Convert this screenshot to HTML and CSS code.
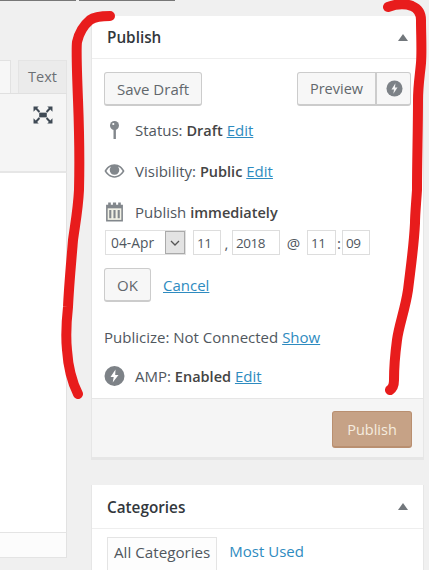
FILE: index.html
```html
<!DOCTYPE html>
<html lang="en">
<head>
<meta charset="utf-8">
<title>Publish</title>
<link rel="stylesheet" href="styles.css">
</head>
<body>
<div class="topbars"><span class="topbar topbar-a"></span><span class="topbar topbar-b"></span></div>
<div class="page">
  <div class="editor">
    <div class="tabs"><span class="tab-visual"></span><span class="tab-text">Text</span></div>
    <div class="toolbar">
      <svg class="fullscreen" viewBox="0 0 21 19" width="20" height="18"><g fill="#3f4a55"><path d="M0.500 0.500h5.500L4.300 2.200 7.500 5.500 6 7 2.800 3.700 0.500 6zM20.500 0.500h-5.500l1.700 1.700-3.200 3.300 1.500 1.500 3.200-3.300L20.500 6zM0.500 18.500h5.500l-1.700-1.700 3.200-3.300L6 12l-3.200 3.300L0.500 13zM20.500 18.500h-5.500l1.700-1.700-3.200-3.300 1.500-1.500 3.200 3.300L20.500 13z"/><rect x="6.500" y="7" width="8" height="5"/></g></svg>
    </div>
    <div class="canvas"></div>
    <div class="status"></div>
  </div>
  <div class="side">
    <section class="box">
      <h2 class="box-head">Publish<span class="caret"></span></h2>
      <div class="box-body">
        <div class="actions">
          <button class="btn">Save Draft</button>
          <div class="preview-group">
            <button class="btn btn-preview">Preview</button>
            <button class="btn btn-amp"><svg viewBox="0 0 18 18" width="17" height="17"><circle cx="9" cy="9" r="8.500" fill="#7d8287"/><path d="M10 3.500 5.800 10h2.700l-.7 4.500L12.200 8H9.500z" fill="#f5f5f5"/></svg></button>
          </div>
        </div>
        <div class="row row-status">
          <svg class="ico" viewBox="0 0 20 20" width="20" height="20"><circle cx="10" cy="5.500" r="4.500" fill="#82878c"/><rect x="9" y="8" width="2.400" height="11" fill="#82878c"/><circle cx="8.800" cy="4" r="1.100" fill="#fff"/></svg>
          <span>Status: <b>Draft</b> <a href="#">Edit</a></span>
        </div>
        <div class="row row-vis">
          <svg class="ico" viewBox="0 0 22 16" width="22" height="16"><path d="M11 1C6 1 2.500 4.500.5 8c2 3.500 5.500 7 10.500 7s8.500-3.500 10.500-7C19.500 4.500 16 1 11 1zm0 12.500c-3.700 0-6.700-2.500-8.500-5.500C3.700 6 5.500 4 7.500 3.200 6.600 4.200 6 5.500 6 7a5 5 0 0 0 10 0c0-1.500-.6-2.800-1.500-3.800 2 .8 3.800 2.800 5 4.800-1.800 3-4.800 5.500-8.500 5.500z" fill="#82878c"/></svg>
          <span>Visibility: <b>Public</b> <a href="#">Edit</a></span>
        </div>
        <div class="row row-date">
          <svg class="ico" viewBox="1.500 0.500 17 19" width="20" height="20"><path d="M2 3h2V1h2.500v2h2V1h3v2h2V1H16v2h2v16H2z" fill="#82878c"/><rect x="3.500" y="6.500" width="13" height="11" fill="#f1f1e6"/><path d="M5 8h2v8H5zM9 8h2v8H9zM13 8h2v8h-2z" fill="#82878c"/></svg>
          <span>Publish <b>immediately</b></span>
        </div>
        <div class="date-row">
          <span class="select"><span class="select-val">04-Apr</span><span class="select-arrow"><svg viewBox="0 0 10 6" width="10" height="6"><path d="M1 1l4 4 4-4" fill="none" stroke="#555" stroke-width="1.300"/></svg></span></span>
          <span class="field f-day">11</span><span class="sep">,</span>
          <span class="field f-year">2018</span><span class="at">@</span>
          <span class="field f-hour">11</span><span class="colon">:</span>
          <span class="field f-min">09</span>
        </div>
        <div class="ok-row"><button class="btn btn-ok">OK</button><a href="#">Cancel</a></div>
        <div class="row-plain">Publicize: Not Connected <a href="#">Show</a></div>
        <div class="row row-amp">
          <svg class="ico" viewBox="0 0 20 20" width="20" height="20"><circle cx="10" cy="10" r="10" fill="#7d8287"/><path d="M11 3.500 6 11h3.200l-1 5.500L14 9h-3.300z" fill="#fff"/></svg>
          <span>AMP: <b>Enabled</b> <a href="#">Edit</a></span>
        </div>
      </div>
      <div class="box-foot"><button class="btn-publish">Publish</button></div>
    </section>
    <section class="box box-cat">
      <h2 class="box-head cat-head">Categories<span class="caret"></span></h2>
      <div class="cat-tabs"><span class="cat-active">All Categories</span><a class="cat-link" href="#">Most Used</a></div>
    </section>
  </div>
</div>
<svg class="scribble" viewBox="0 0 429 570" width="429" height="570">
  <path d="M110 16C100 16 94 17 90 20C84 25 79 33 77 42C76 50 77 75 78 100C79 125 80 150 79 190C78 210 75 225 73 240C71 265 69 285 68 307C66 325 66 340 67 350C68 365 70 378 78 394" />
  <path d="M388 7C396 4 404 3 412 6C419 9 421 14 421 20C421 35 422 50 421 63C420 75 418 85 418 100C418 130 417 160 417 190C416 205 415 215 415 223C414 245 411 265 408 290C405 310 399 325 397 340C395 355 394 370 394 380C394 385 393 388 390 390"/>
</svg>
</body>
</html>
```
FILE: styles.css
```css
* { box-sizing: border-box; }
html, body { margin: 0; padding: 0; }
body {
  width: 429px;
  height: 570px;
  overflow: hidden;
  position: relative;
  background: #f0f0f0;
  font-family: "Open Sans", "Noto Sans", sans-serif;
  font-size: 15px;
  color: #50575e;
}
a { color: #2e8bc0; text-decoration: underline; }
b { font-weight: 600; font-size: 14.500px; color: #444; }

.topbars { display: flex; gap: 3px; height: 1px; }
.topbar { display: block; height: 1px; background: #777; }
.topbar-a { width: 76px; }
.topbar-b { width: 96px; }

.page { display: flex; gap: 24px; padding-top: 15px; }

.editor { width: 67px; flex: none; padding-top: 44px; height: 554px; display: flex; flex-direction: column; }
.tabs { display: flex; height: 34px; gap: 7px; }
.tab-visual { width: 11px; background: #f7f7f7; border: 1px solid #e2e2e2; border-left: 0; border-bottom: 0; }
.tab-text { width: 49px; background: #ebebeb; border: 1px solid #e4e4e4; border-bottom: 0; text-align: center; line-height: 32px; color: #6b7075; font-size: 14.500px; }
.toolbar { height: 80px; background: #f5f5f5; border-top: 1px solid #e0e0e0; border-right: 1px solid #e2e2e2; border-bottom: 2px solid #e6e6e6; position: relative; display: flex; justify-content: flex-end; padding: 12px 13px 0 0; margin-top: -1px; }
.fullscreen { display: block; }
.canvas { height: 359px; background: #fff; border-right: 1px solid #e2e2e2; }
.status { height: 26px; background: #fcfcfc; border-top: 1px solid #e4e4e4; border-bottom: 1px solid #e4e4e4; border-right: 1px solid #e2e2e2; }

.side { width: 333px; flex: none; }
.box { background: #fff; border: 1px solid #e6e6e6; border-top: 0; }
.box-head { margin: 0; height: 43px; padding: 0 14px 0 15px; display: flex; align-items: center; justify-content: space-between; font-size: 15.300px; font-weight: 600; color: #32373c; border-bottom: 1px solid #eee; }
.caret { width: 0; height: 0; border-left: 5px solid transparent; border-right: 5px solid transparent; border-bottom: 7px solid #72777c; margin-right: 1px; }

.box-body { height: 339px; padding: 13px 12px 0 12px; }
.actions { display: flex; justify-content: space-between; }
.btn { display: block; font: inherit; font-size: 15px; color: #62676c; height: 34px; padding: 0 12px; background: #f7f7f7; border: 1px solid #ccc; border-bottom-width: 2px; border-radius: 3px; }
.preview-group { display: flex; }
.btn-preview { border-radius: 3px 0 0 3px; border-right-width: 1px; width: 79px; padding: 0; font-size: 14.500px; }
.btn-amp { width: 35px; padding: 0 0 0 1px; border-left: 1px solid #ccc; border-radius: 0 3px 3px 0; display: flex; align-items: center; justify-content: center; }

.row { display: flex; align-items: center; gap: 10px; height: 20px; }
.ico { display: block; flex: none; width: 21px; }
.row-status { margin-top: 14px; }
.row-vis { margin-top: 21px; }
.row-date { margin-top: 21px; }
.date-row { display: flex; align-items: center; margin-top: 8px; height: 25px; padding-left: 1px; }
.select { display: flex; width: 81px; height: 25px; background: #fff; border: 1px solid #e0e0e0; }
.select-val { flex: 1; padding-left: 5px; line-height: 24px; font-size: 13.800px; }
.select-arrow { width: 20px; background: #e3e3e3; border: 1px solid #aaa; display: flex; align-items: center; justify-content: center; }
.field { display: block; height: 25px; background: #fff; border: 1px solid #ddd; line-height: 25px; padding-left: 3px; font-size: 13.500px; letter-spacing: -0.500px; }
.f-day { width: 28px; margin-left: 7px; }
.sep { width: 11px; text-align: center; }
.f-year { width: 48px; }
.at { width: 27px; text-align: center; }
.f-hour { width: 29px; }
.colon { width: 6px; text-align: center; }
.f-min { width: 28px; }

.ok-row { display: flex; align-items: center; gap: 12px; margin-top: 13px; }
.btn-ok { width: 47px; height: 34px; padding: 0; }
.row-plain { margin-top: 25px; height: 20px; line-height: 20px; }
.row-amp { margin-top: 19px; }

.box-foot { height: 61px; background: #f5f5f5; border-top: 1px solid #e6e6e6; border-bottom: 2px solid #e6e6e6; display: flex; justify-content: flex-end; align-items: flex-start; padding: 12px 11px 0 0; }
.btn-publish { width: 80px; height: 37px; font: inherit; font-size: 14.500px; color: #f5ecdf; background: #c6a286; border: 1px solid #b98f70; border-bottom-width: 2px; border-radius: 3px; }

.box-cat { margin-top: 25px; border-bottom: 0; }
.cat-head { height: 44px; }
.cat-tabs { display: flex; align-items: flex-end; padding: 9px 14px 0 15px; gap: 11px; height: 41px; }
.cat-active { display: block; height: 33px; padding: 0 6px; border: 1px solid #e4e4e4; border-bottom: 0; line-height: 29px; background: #fdfdfd; font-size: 15.200px; }
.cat-link { text-decoration: none; line-height: 29px; height: 33px; display: block; padding-left: 1px; }

.scribble { position: absolute; left: 0; top: 0; pointer-events: none; }
.scribble path { fill: none; stroke: #e81c1c; stroke-width: 10; stroke-linecap: round; stroke-linejoin: round; }
```
